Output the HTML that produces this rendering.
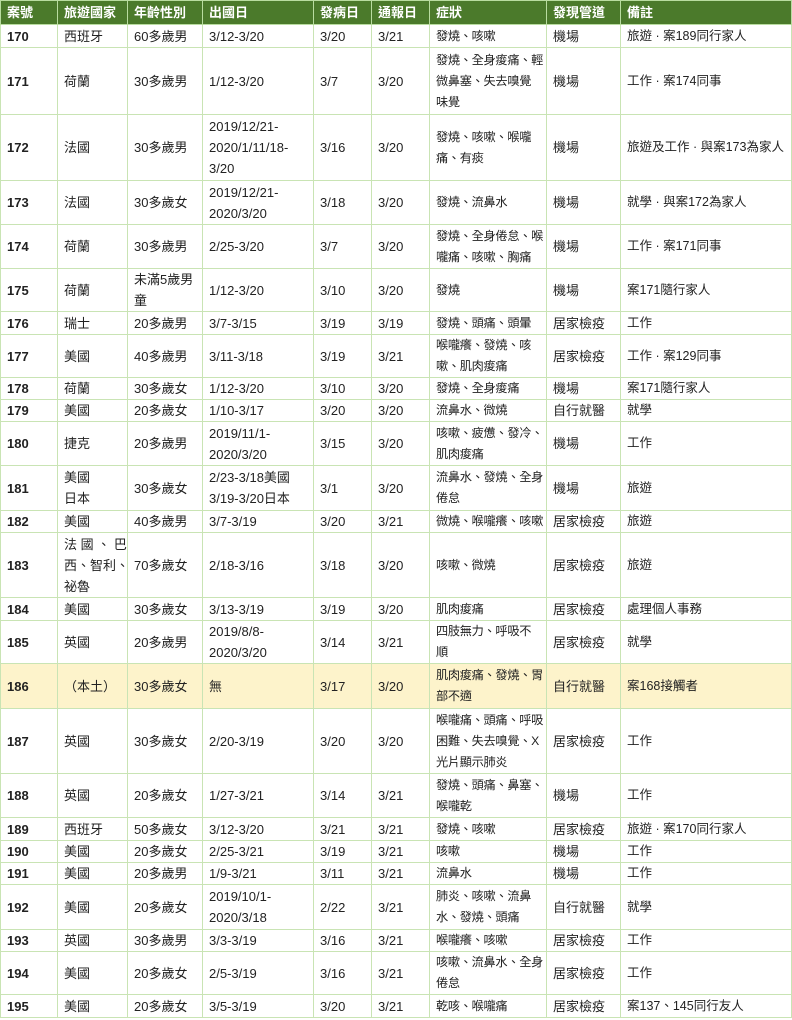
<!DOCTYPE html>
<html><head><meta charset="utf-8"><style>
body{margin:0;background:#fff;}
table{position:absolute;left:0;top:0;border-collapse:collapse;table-layout:fixed;width:791px;font-family:"Liberation Sans","Noto Sans CJK TC",sans-serif;font-size:13px;color:#222;}
td,th{border:1px solid #c9e4b4;padding:0 0 0 6px;white-space:nowrap;overflow:hidden;line-height:21px;vertical-align:middle;text-align:left;}
th{background:#4b7a2b;color:#fff;font-weight:bold;border-color:#b9dca0;}
td:first-child{font-weight:bold;}
td:nth-child(7){font-size:12.2px;letter-spacing:-0.3px;}
td:nth-child(9){font-size:12.5px;}
tr.h td{background:#fdf3cb;}
</style></head><body>
<table>
<colgroup><col style="width:57px"><col style="width:70px"><col style="width:75px"><col style="width:111px"><col style="width:58px"><col style="width:58px"><col style="width:117px"><col style="width:74px"><col style="width:171px"></colgroup>
<tr style="height:24px"><th>案號</th><th>旅遊國家</th><th>年齡性別</th><th>出國日</th><th>發病日</th><th>通報日</th><th>症狀</th><th>發現管道</th><th>備註</th></tr>
<tr style="height:23px"><td>170</td><td>西班牙</td><td>60多歲男</td><td>3/12-3/20</td><td>3/20</td><td>3/21</td><td>發燒、咳嗽</td><td>機場</td><td>旅遊 · 案189同行家人</td></tr>
<tr style="height:67px"><td>171</td><td>荷蘭</td><td>30多歲男</td><td>1/12-3/20</td><td>3/7</td><td>3/20</td><td>發燒、全身痠痛、輕<br>微鼻塞、失去嗅覺<br>味覺</td><td>機場</td><td>工作 · 案174同事</td></tr>
<tr style="height:66px"><td>172</td><td>法國</td><td>30多歲男</td><td>2019/12/21-<br>2020/1/11/18-<br>3/20</td><td>3/16</td><td>3/20</td><td>發燒、咳嗽、喉嚨<br>痛、有痰</td><td>機場</td><td>旅遊及工作 · 與案173為家人</td></tr>
<tr style="height:44px"><td>173</td><td>法國</td><td>30多歲女</td><td>2019/12/21-<br>2020/3/20</td><td>3/18</td><td>3/20</td><td>發燒、流鼻水</td><td>機場</td><td>就學 · 與案172為家人</td></tr>
<tr style="height:44px"><td>174</td><td>荷蘭</td><td>30多歲男</td><td>2/25-3/20</td><td>3/7</td><td>3/20</td><td>發燒、全身倦怠、喉<br>嚨痛、咳嗽、胸痛</td><td>機場</td><td>工作 · 案171同事</td></tr>
<tr style="height:43px"><td>175</td><td>荷蘭</td><td>未滿5歲男<br>童</td><td>1/12-3/20</td><td>3/10</td><td>3/20</td><td>發燒</td><td>機場</td><td>案171隨行家人</td></tr>
<tr style="height:23px"><td>176</td><td>瑞士</td><td>20多歲男</td><td>3/7-3/15</td><td>3/19</td><td>3/19</td><td>發燒、頭痛、頭暈</td><td>居家檢疫</td><td>工作</td></tr>
<tr style="height:43px"><td>177</td><td>美國</td><td>40多歲男</td><td>3/11-3/18</td><td>3/19</td><td>3/21</td><td>喉嚨癢、發燒、咳<br>嗽、肌肉痠痛</td><td>居家檢疫</td><td>工作 · 案129同事</td></tr>
<tr style="height:22px"><td>178</td><td>荷蘭</td><td>30多歲女</td><td>1/12-3/20</td><td>3/10</td><td>3/20</td><td>發燒、全身痠痛</td><td>機場</td><td>案171隨行家人</td></tr>
<tr style="height:22px"><td>179</td><td>美國</td><td>20多歲女</td><td>1/10-3/17</td><td>3/20</td><td>3/20</td><td>流鼻水、微燒</td><td>自行就醫</td><td>就學</td></tr>
<tr style="height:44px"><td>180</td><td>捷克</td><td>20多歲男</td><td>2019/11/1-<br>2020/3/20</td><td>3/15</td><td>3/20</td><td>咳嗽、疲憊、發冷、<br>肌肉痠痛</td><td>機場</td><td>工作</td></tr>
<tr style="height:45px"><td>181</td><td>美國<br>日本</td><td>30多歲女</td><td>2/23-3/18美國<br>3/19-3/20日本</td><td>3/1</td><td>3/20</td><td>流鼻水、發燒、全身<br>倦怠</td><td>機場</td><td>旅遊</td></tr>
<tr style="height:22px"><td>182</td><td>美國</td><td>40多歲男</td><td>3/7-3/19</td><td>3/20</td><td>3/21</td><td>微燒、喉嚨癢、咳嗽</td><td>居家檢疫</td><td>旅遊</td></tr>
<tr style="height:65px"><td>183</td><td>法 國 、 巴<br>西、智利、<br>祕魯</td><td>70多歲女</td><td>2/18-3/16</td><td>3/18</td><td>3/20</td><td>咳嗽、微燒</td><td>居家檢疫</td><td>旅遊</td></tr>
<tr style="height:23px"><td>184</td><td>美國</td><td>30多歲女</td><td>3/13-3/19</td><td>3/19</td><td>3/20</td><td>肌肉痠痛</td><td>居家檢疫</td><td>處理個人事務</td></tr>
<tr style="height:43px"><td>185</td><td>英國</td><td>20多歲男</td><td>2019/8/8-<br>2020/3/20</td><td>3/14</td><td>3/21</td><td>四肢無力、呼吸不<br>順</td><td>居家檢疫</td><td>就學</td></tr>
<tr class="h" style="height:45px"><td>186</td><td>（本土）</td><td>30多歲女</td><td>無</td><td>3/17</td><td>3/20</td><td>肌肉痠痛、發燒、胃<br>部不適</td><td>自行就醫</td><td>案168接觸者</td></tr>
<tr style="height:65px"><td>187</td><td>英國</td><td>30多歲女</td><td>2/20-3/19</td><td>3/20</td><td>3/20</td><td>喉嚨痛、頭痛、呼吸<br>困難、失去嗅覺、X<br>光片顯示肺炎</td><td>居家檢疫</td><td>工作</td></tr>
<tr style="height:44px"><td>188</td><td>英國</td><td>20多歲女</td><td>1/27-3/21</td><td>3/14</td><td>3/21</td><td>發燒、頭痛、鼻塞、<br>喉嚨乾</td><td>機場</td><td>工作</td></tr>
<tr style="height:23px"><td>189</td><td>西班牙</td><td>50多歲女</td><td>3/12-3/20</td><td>3/21</td><td>3/21</td><td>發燒、咳嗽</td><td>居家檢疫</td><td>旅遊 · 案170同行家人</td></tr>
<tr style="height:22px"><td>190</td><td>美國</td><td>20多歲女</td><td>2/25-3/21</td><td>3/19</td><td>3/21</td><td>咳嗽</td><td>機場</td><td>工作</td></tr>
<tr style="height:22px"><td>191</td><td>美國</td><td>20多歲男</td><td>1/9-3/21</td><td>3/11</td><td>3/21</td><td>流鼻水</td><td>機場</td><td>工作</td></tr>
<tr style="height:45px"><td>192</td><td>美國</td><td>20多歲女</td><td>2019/10/1-<br>2020/3/18</td><td>2/22</td><td>3/21</td><td>肺炎、咳嗽、流鼻<br>水、發燒、頭痛</td><td>自行就醫</td><td>就學</td></tr>
<tr style="height:22px"><td>193</td><td>英國</td><td>30多歲男</td><td>3/3-3/19</td><td>3/16</td><td>3/21</td><td>喉嚨癢、咳嗽</td><td>居家檢疫</td><td>工作</td></tr>
<tr style="height:43px"><td>194</td><td>美國</td><td>20多歲女</td><td>2/5-3/19</td><td>3/16</td><td>3/21</td><td>咳嗽、流鼻水、全身<br>倦怠</td><td>居家檢疫</td><td>工作</td></tr>
<tr style="height:23px"><td>195</td><td>美國</td><td>20多歲女</td><td>3/5-3/19</td><td>3/20</td><td>3/21</td><td>乾咳、喉嚨痛</td><td>居家檢疫</td><td>案137、145同行友人</td></tr>
</table>
</body></html>
